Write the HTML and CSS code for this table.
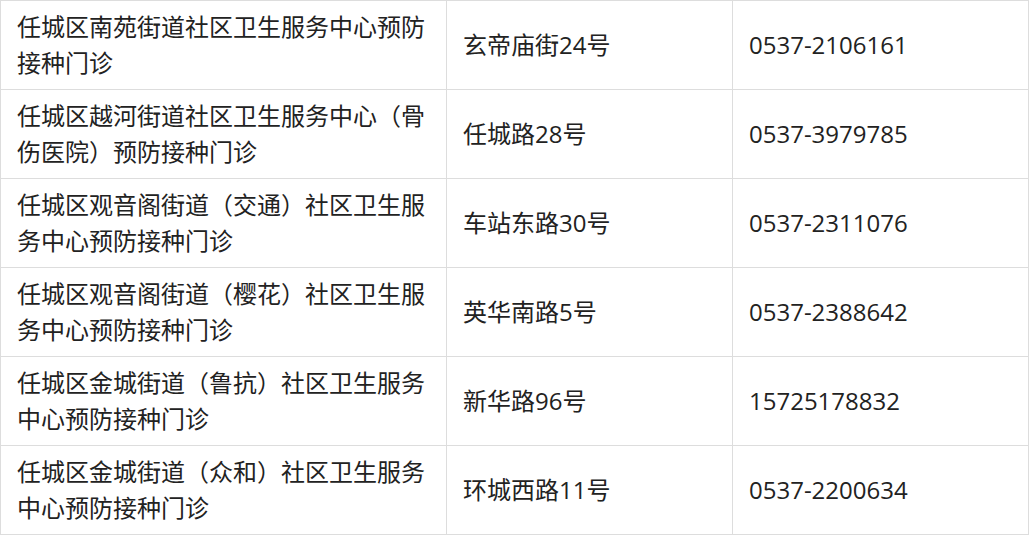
FILE: index.html
```html
<!DOCTYPE html>
<html lang="zh-CN">
<head>
<meta charset="utf-8">
<title>预防接种门诊</title>
<link rel="stylesheet" href="styles.css">
</head>
<body>
<table class="clinics">
  <colgroup>
    <col class="col-name">
    <col class="col-addr">
    <col class="col-tel">
  </colgroup>
  <tbody>
    <tr><td>任城区南苑街道社区卫生服务中心预防接种门诊</td><td>玄帝庙街24号</td><td>0537-2106161</td></tr>
    <tr><td>任城区越河街道社区卫生服务中心（骨伤医院）预防接种门诊</td><td>任城路28号</td><td>0537-3979785</td></tr>
    <tr><td>任城区观音阁街道（交通）社区卫生服务中心预防接种门诊</td><td>车站东路30号</td><td>0537-2311076</td></tr>
    <tr><td>任城区观音阁街道（樱花）社区卫生服务中心预防接种门诊</td><td>英华南路5号</td><td>0537-2388642</td></tr>
    <tr><td>任城区金城街道（鲁抗）社区卫生服务中心预防接种门诊</td><td>新华路96号</td><td>15725178832</td></tr>
    <tr><td>任城区金城街道（众和）社区卫生服务中心预防接种门诊</td><td>环城西路11号</td><td>0537-2200634</td></tr>
  </tbody>
</table>
</body>
</html>
```
FILE: styles.css
```css
html, body {
  margin: 0;
  padding: 0;
  background: #ffffff;
}

.clinics {
  border-collapse: collapse;
  table-layout: fixed;
  width: 1028px;
  font-family: "Open Sans", "Noto Sans CJK SC", "Microsoft YaHei", sans-serif;
  font-size: 24px;
  line-height: 36px;
  color: #222222;
}

.col-name { width: 446px; }
.col-addr { width: 286px; }
.col-tel { width: 296px; }

.clinics tr {
  height: 89px;
}

.clinics td {
  border: 1px solid #dddddd;
  padding: 0 16px;
  vertical-align: middle;
}
```
